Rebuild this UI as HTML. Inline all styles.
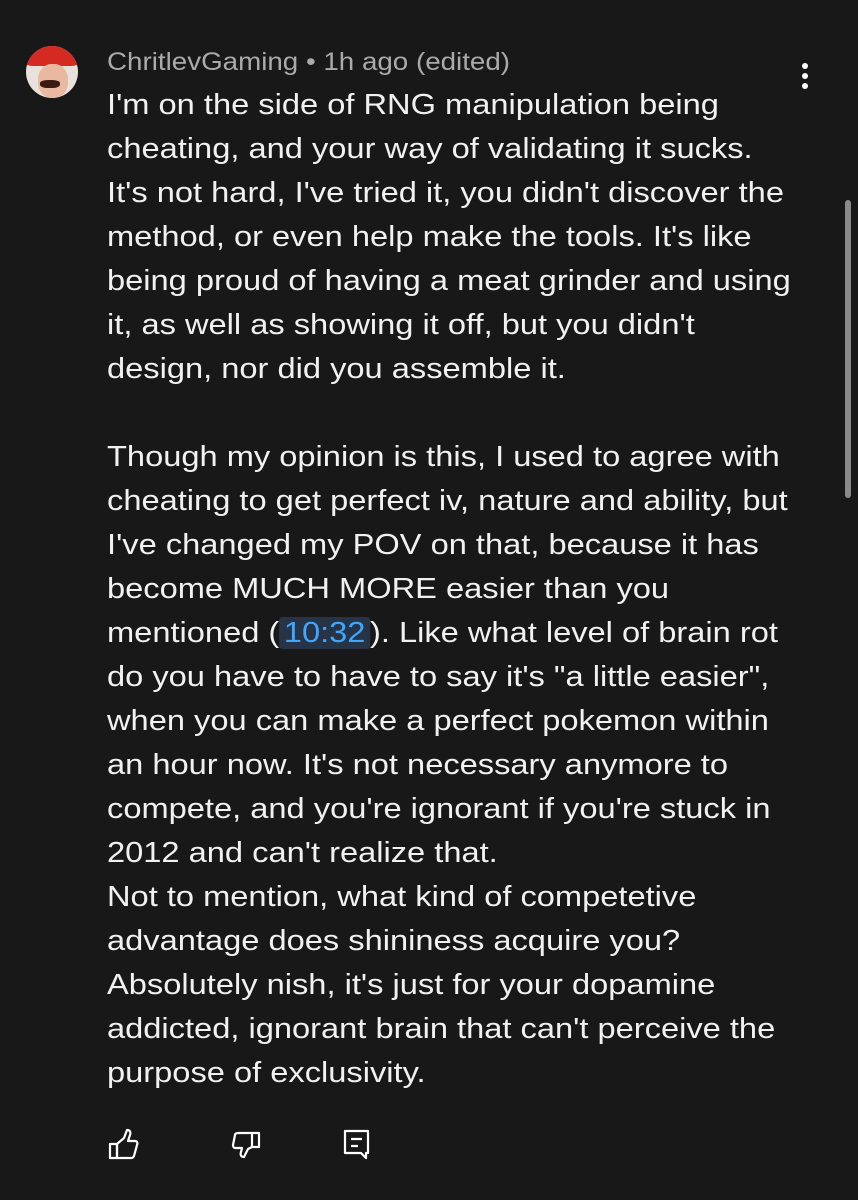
<!DOCTYPE html>
<html><head><meta charset="utf-8">
<style>
html,body{margin:0;padding:0;background:#181818;}
body{width:858px;height:1200px;position:relative;overflow:hidden;font-family:"Liberation Sans",sans-serif;}
.hdr{position:absolute;left:107px;top:48px;font-size:25px;color:#aaaaaa;white-space:nowrap;transform:scaleX(1.11);transform-origin:left center;}
.l{position:absolute;left:107px;font-size:29px;color:#f1f1f1;white-space:nowrap;line-height:30px;transform:scaleX(1.125);transform-origin:left center;}
.ts{background:#263445;color:#3ea6ff;padding:0 4px;border-radius:3px;}
.av{position:absolute;left:26px;top:46px;width:52px;height:52px;border-radius:50%;overflow:hidden;background:#e9e2dc;}
.sb{position:absolute;left:845px;top:200px;width:6px;height:298px;border-radius:3px;background:#8a8a8a;}
.dot{position:absolute;left:802px;width:6px;height:6px;border-radius:50%;background:#fff;}
</style></head><body>
<div class="av">
 <div style="position:absolute;left:-4px;top:-6px;width:60px;height:26px;background:#d42a22;border-radius:50% 50% 20% 20%;"></div>
 <div style="position:absolute;left:12px;top:18px;width:30px;height:34px;background:#e8b9a0;border-radius:45%;"></div>
 <div style="position:absolute;left:14px;top:34px;width:20px;height:8px;background:#3a1a12;border-radius:40%;"></div>
</div>
<div class="hdr">ChritlevGaming • 1h ago (edited)</div>
<div class="dot" style="top:63px"></div><div class="dot" style="top:73px"></div><div class="dot" style="top:83px"></div>
<div class="sb"></div>

<div class="l" style="top:90px">I'm on the side of RNG manipulation being</div>
<div class="l" style="top:134px">cheating, and your way of validating it sucks.</div>
<div class="l" style="top:178px">It's not hard, I've tried it, you didn't discover the</div>
<div class="l" style="top:222px">method, or even help make the tools. It's like</div>
<div class="l" style="top:266px">being proud of having a meat grinder and using</div>
<div class="l" style="top:310px">it, as well as showing it off, but you didn't</div>
<div class="l" style="top:354px">design, nor did you assemble it.</div>
<div class="l" style="top:442px">Though my opinion is this, I used to agree with</div>
<div class="l" style="top:486px">cheating to get perfect iv, nature and ability, but</div>
<div class="l" style="top:530px">I've changed my POV on that, because it has</div>
<div class="l" style="top:574px">become MUCH MORE easier than you</div>
<div class="l" style="top:618px">mentioned (<span class="ts">10:32</span>). Like what level of brain rot</div>
<div class="l" style="top:662px">do you have to have to say it's "a little easier",</div>
<div class="l" style="top:706px">when you can make a perfect pokemon within</div>
<div class="l" style="top:750px">an hour now. It's not necessary anymore to</div>
<div class="l" style="top:794px">compete, and you're ignorant if you're stuck in</div>
<div class="l" style="top:838px">2012 and can't realize that.</div>
<div class="l" style="top:882px">Not to mention, what kind of competetive</div>
<div class="l" style="top:926px">advantage does shininess acquire you?</div>
<div class="l" style="top:970px">Absolutely nish, it's just for your dopamine</div>
<div class="l" style="top:1014px">addicted, ignorant brain that can't perceive the</div>
<div class="l" style="top:1058px">purpose of exclusivity.</div>

<svg style="position:absolute;left:0;top:0" width="858" height="1200" fill="none" stroke="#fff" stroke-width="2.2" stroke-linejoin="round">
 <path d="M110 1144h7v14h-7z"/>
 <path d="M117 1144l7-6 3-8c3 0 4 2 3 5l-2 6h7c2 0 3 2 2 4l-3 11c-1 2-2 2-3 2h-14z"/>
 <path d="M259 1133h-7v14h7z"/>
 <path d="M252 1133h-14c-2 0-3 1-3 2l-2 10c0 2 1 3 2 3h7l-1 4c-1 3 0 5 3 5l4-8 4-2"/>
 <path d="M345 1131h23v22h-2v5l-5-5h-16z"/>
 <path d="M351 1139h11M351 1146h7"/>
</svg>
</body></html>
